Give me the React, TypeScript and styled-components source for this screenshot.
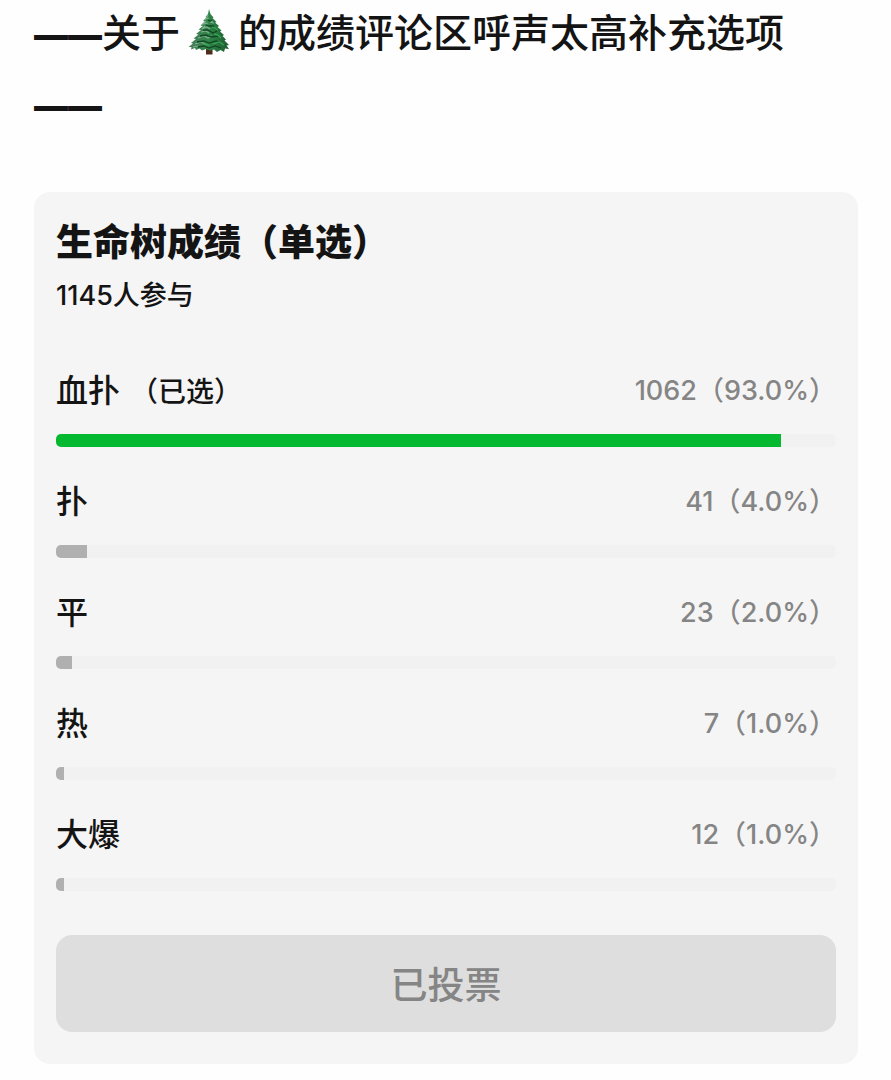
import React from "react";
import styled, { createGlobalStyle } from "styled-components";

const GlobalStyle = createGlobalStyle`
  *, *::before, *::after { box-sizing: border-box; }
  body {
    margin: 0;
    background: #fefefe;
    color: #141414;
    font-family: Inter, "Noto Sans CJK SC", sans-serif;
    font-weight: 500;
  }
`;

const Page = styled.main`
  padding: 0 33px 16px 34px;
`;

const Headline = styled.p`
  margin: -3px 0 53px;
  font-size: 39px;
  line-height: 71px;
`;

const Dash = styled.span`
  font-size: 34px;
  font-weight: 900;
  line-height: 1;
`;

const Tree = styled.svg`
  width: 42px;
  height: 46px;
  margin: 0 8px;
  vertical-align: -8px;
`;

const Card = styled.section`
  padding: 23px 22px 32px;
  border-radius: 16px;
  background: #f5f5f5;
`;

const Title = styled.h2`
  margin: 0;
  font-size: 37px;
  font-weight: 900;
  line-height: 56px;
`;

const Participants = styled.p`
  margin: 5px 0 40px;
  font-size: 27px;
  line-height: 40px;
`;

const Options = styled.ul`
  margin: 0;
  padding: 0;
  list-style: none;
`;

const Option = styled.li`
  height: 111px;
`;

const OptionRow = styled.div`
  display: flex;
  align-items: center;
  justify-content: space-between;
  height: 64px;
`;

const OptionName = styled.span`
  font-size: 32px;
`;

const Chosen = styled.span`
  margin-left: 10px;
  font-size: 28px;
`;

const Votes = styled.span`
  color: #858585;
  font-size: 27px;
`;

const Track = styled.div`
  height: 13px;
  margin-top: 14px;
  overflow: hidden;
  border-radius: 5px;
  background: #f1f1f1;
`;

const Fill = styled.div<{ $chosen: boolean }>`
  height: 100%;
  background: ${(p) => (p.$chosen ? "#04b82f" : "#b0b0b0")};
`;

const VoteButton = styled.button`
  display: block;
  width: 100%;
  height: 97px;
  margin-top: 24px;
  padding: 0 0 2px;
  border: 0;
  border-radius: 16px;
  background: #dedede;
  color: #858585;
  font: inherit;
  font-size: 37px;
`;

const options = [
  { name: "血扑", votes: 1062, percent: 93, chosen: true },
  { name: "扑", votes: 41, percent: 4, chosen: false },
  { name: "平", votes: 23, percent: 2, chosen: false },
  { name: "热", votes: 7, percent: 1, chosen: false },
  { name: "大爆", votes: 12, percent: 1, chosen: false },
];

function EvergreenTree() {
  return (
    <Tree viewBox="0 0 42 46" role="img" aria-label="🌲">
      <defs>
        <linearGradient id="needles" x1="0" y1="0" x2="1" y2="0">
          <stop offset="0" stopColor="#4b7d5c" />
          <stop offset="0.5" stopColor="#2f8549" />
          <stop offset="1" stopColor="#1c5c30" />
        </linearGradient>
      </defs>
      <path d="M18 38h6.500v7.500h-6.500z" fill="#4d2c1c" />
      <path
        d="M21 0L22.500 5L25.500 8.500L24.500 9L28.500 13L27 13.500L31 17L29.500 18L33.500 21.500L32 22.500L36 26L34.500 27L38 30.500L36.500 31.500L41 36L38.500 36.500L41 40L37 39.500L36 43L32.500 41L29 43L26 40.500L22 41.500L18 40L14 41.500L11.500 39.500L8 41L7 39L3 40.500L3.500 38L0.500 38L5 34.500L3 34L8 30L5.500 29.500L10.500 25.500L8 25L13 21L10.500 20.500L15 17L12.500 16.500L17 12.500L15 12L18.500 8.500L17.500 8L20 5Z"
        fill="url(#needles)"
      />
      <path
        d="M20 6l-2 4 3-1M18 12l-3 3 5-1M23 11l2 3-3-1M17 17l-3 3 5-2 3 2M13 23l5-1 3 2M10 29l6-2 4 2 4-2M7 35l6-2 4 2M5 38l5-1"
        fill="none"
        stroke="#7fac8c"
        strokeWidth="1.200"
      />
      <path
        d="M20 11l2 1 2-1M18 16l3 1 5 0M15 21l5 0 5 3 4-2M12 27l6-1 5 2 7-1M9 33l7-1 5 2 7-2 4 2M10 38l6-1 5 2 6-2 6 2"
        fill="none"
        stroke="#0f4723"
        strokeWidth="1.300"
      />
      <path
        d="M24 18l3 1 3 2M26 25l4 1 3 3M25 35l6-2 5 3M16 35l5 1"
        fill="none"
        stroke="#3aa553"
        strokeWidth="1.300"
      />
    </Tree>
  );
}

export default function App() {
  return (
    <>
      <GlobalStyle />
      <Page>
        <Headline>
          <Dash>——</Dash>关于
          <EvergreenTree />
          的成绩评论区呼声太高补充选项
          <br />
          <Dash>——</Dash>
        </Headline>
        <Card>
          <Title>生命树成绩（单选）</Title>
          <Participants>1145人参与</Participants>
          <Options>
            {options.map((o) => (
              <Option key={o.name}>
                <OptionRow>
                  <OptionName>
                    {o.name}
                    {o.chosen && <Chosen>（已选）</Chosen>}
                  </OptionName>
                  <Votes>
                    {o.votes}（{o.percent.toFixed(1)}%）
                  </Votes>
                </OptionRow>
                <Track
                  role="progressbar"
                  aria-label={o.name}
                  aria-valuenow={o.percent}
                >
                  <Fill $chosen={o.chosen} style={{ width: `${o.percent}%` }} />
                </Track>
              </Option>
            ))}
          </Options>
          <VoteButton type="button" disabled>
            已投票
          </VoteButton>
        </Card>
      </Page>
    </>
  );
}
